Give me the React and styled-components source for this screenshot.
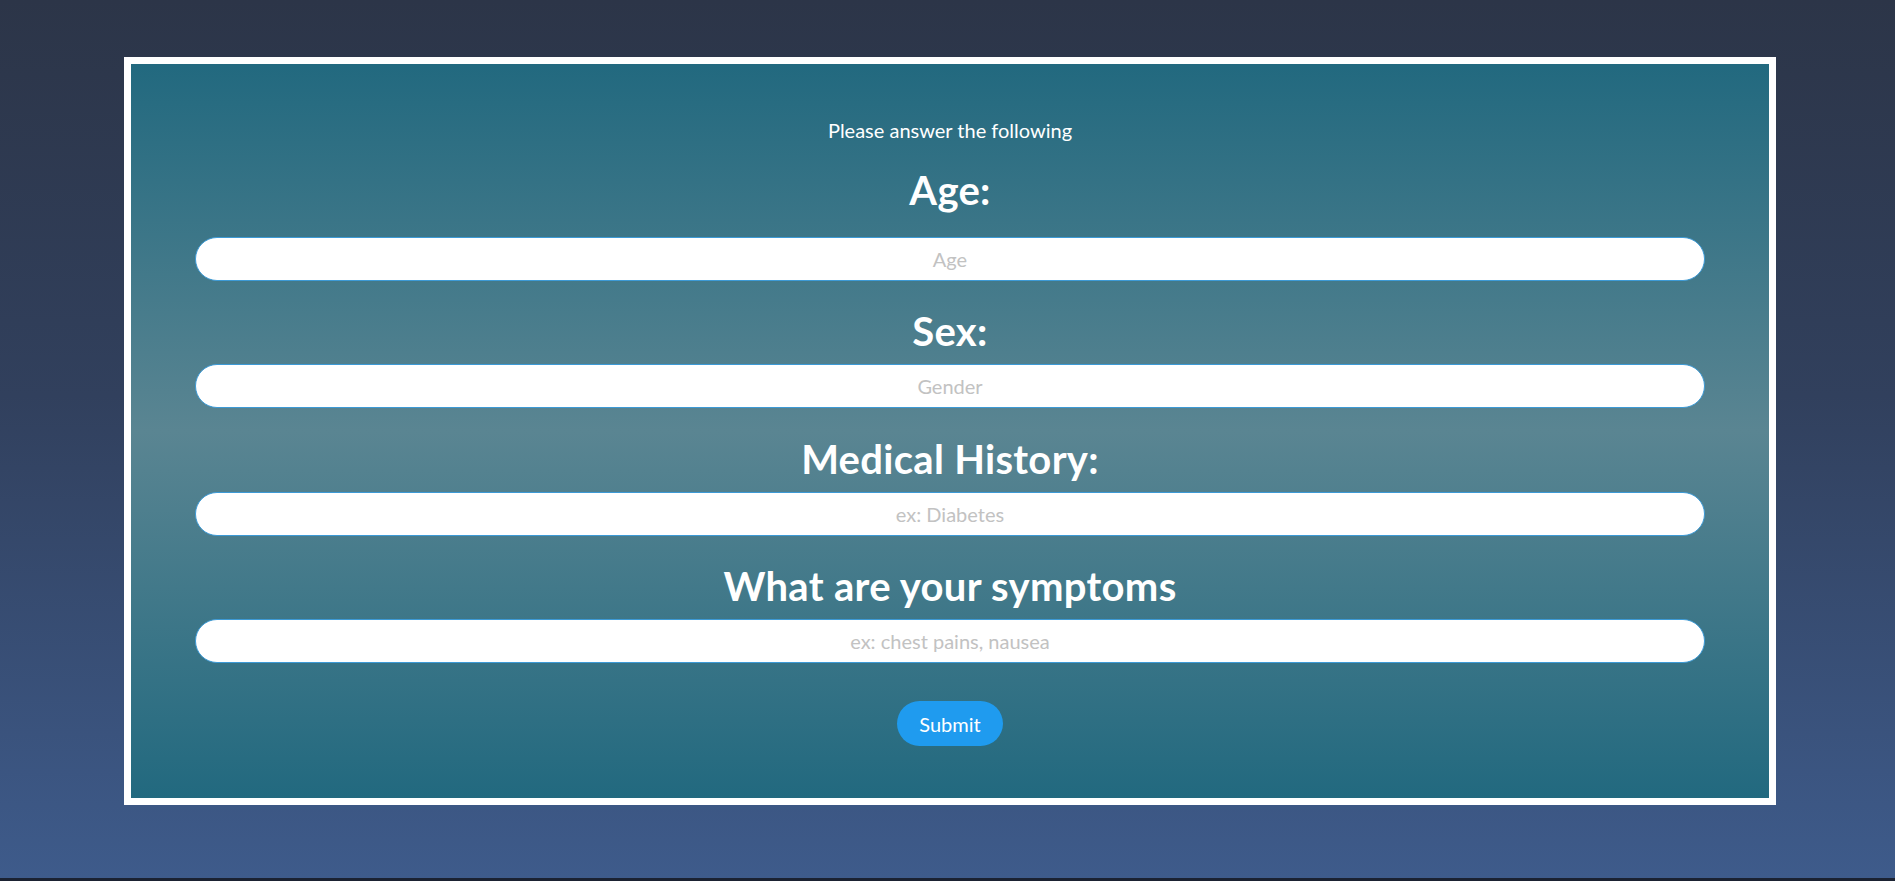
import React from "react";
import styled, { createGlobalStyle } from "styled-components";

const GlobalStyle = createGlobalStyle`
  html, body {
    margin: 0;
    padding: 0;
    background: #1b2232;
  }
  body {
    font-family: Lato, "Open Sans", sans-serif;
  }
  * { box-sizing: border-box; }
`;

const Page = styled.main`
  height: 878px;
  padding: 57px 119px 0 124px;
  background: linear-gradient(180deg, #2c3548 0%, #31405d 45%, #3e5b8b 100%);
`;

const Card = styled.form`
  border: 7px solid #ffffff;
  background: linear-gradient(180deg, #22697f 0%, #5a8592 50%, #22697f 100%);
  padding: 54px 64px 52px;
  display: flex;
  flex-direction: column;
  align-items: stretch;
`;

const Intro = styled.p`
  margin: 0 0 24px;
  color: #ffffff;
  font-size: 20px;
  line-height: 24px;
  text-align: center;
`;

const Field = styled.div`
  display: flex;
  flex-direction: column;
  margin-top: ${(p) => (p.$first ? "0" : "26.5px")};
`;

const Label = styled.label`
  color: #ffffff;
  font-weight: 700;
  font-size: 40px;
  letter-spacing: 0.3px;
  line-height: 48px;
  text-align: center;
  margin-bottom: ${(p) => (p.$first ? "22.5px" : "9px")};
`;

const Input = styled.input`
  height: 44px;
  width: 100%;
  border: 1px solid #3d9ad6;
  border-radius: 22px;
  background: #ffffff;
  text-align: center;
  font-family: Lato, "Open Sans", sans-serif;
  font-size: 20px;
  color: #333;
  outline: none;
  &::placeholder {
    color: #c2c2c2;
  }
`;

const Actions = styled.div`
  display: flex;
  justify-content: center;
  margin-top: 38px;
`;

const SubmitButton = styled.button`
  height: 45px;
  padding: 0 22px;
  border: none;
  border-radius: 23px;
  background: #1f9bef;
  color: #ffffff;
  font-family: Lato, "Open Sans", sans-serif;
  font-size: 20px;
  cursor: pointer;
`;

const fields = [
  { id: "age", label: "Age:", placeholder: "Age" },
  { id: "sex", label: "Sex:", placeholder: "Gender" },
  { id: "history", label: "Medical History:", placeholder: "ex: Diabetes" },
  { id: "symptoms", label: "What are your symptoms", placeholder: "ex: chest pains, nausea" },
];

export default function App() {
  return (
    <>
      <GlobalStyle />
      <Page>
        <Card onSubmit={(e) => e.preventDefault()}>
          <Intro>Please answer the following</Intro>
          {fields.map((f, i) => (
            <Field key={f.id} $first={i === 0}>
              <Label htmlFor={f.id} $first={i === 0}>{f.label}</Label>
              <Input id={f.id} placeholder={f.placeholder} />
            </Field>
          ))}
          <Actions>
            <SubmitButton type="submit">Submit</SubmitButton>
          </Actions>
        </Card>
      </Page>
    </>
  );
}
